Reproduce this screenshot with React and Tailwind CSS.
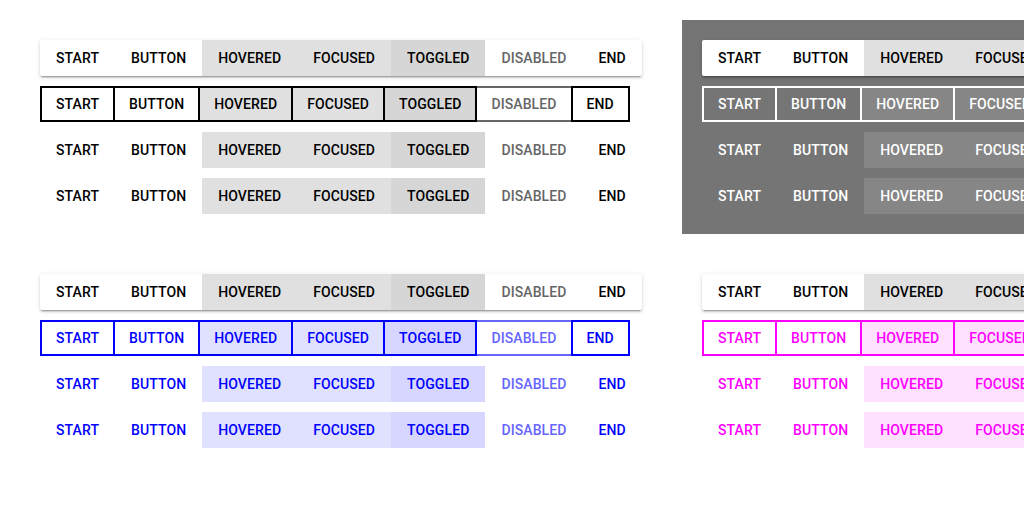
import React from 'react'

const LABELS = ['Start', 'Button', 'Hovered', 'Focused', 'Toggled', 'Disabled', 'End']

const THEMES = {
  plain: {
    text: 'text-black',
    border: 'border-black',
    hover: 'bg-[#e0e0e0]',
    toggle: 'bg-[#d6d6d6]',
    disText: 'text-[#666666]',
    disBorder: 'border-[#666666]',
  },
  dark: {
    text: 'text-white',
    border: 'border-white',
    hover: 'bg-[#868686]',
    toggle: 'bg-[#8e8e8e]',
    disText: 'text-[#c8c8c8]',
    disBorder: 'border-[#c8c8c8]',
  },
  blue: {
    text: 'text-[#0000ff]',
    border: 'border-[#0000ff]',
    hover: 'bg-[#e0e0ff]',
    toggle: 'bg-[#d6d6ff]',
    disText: 'text-[#6666ff]',
    disBorder: 'border-[#6666ff]',
  },
  magenta: {
    text: 'text-[#ff00ff]',
    border: 'border-[#ff00ff]',
    hover: 'bg-[#ffe0ff]',
    toggle: 'bg-[#ffd6ff]',
    disText: 'text-[#ff66ff]',
    disBorder: 'border-[#ff66ff]',
  },
}

function bgFor(label, theme) {
  if (label === 'Hovered' || label === 'Focused') return theme.hover
  if (label === 'Toggled') return theme.toggle
  return ''
}

function ButtonRow({ theme, variant }) {
  const t = variant === 'elevated' ? THEMES.plain : theme
  const outlined = variant === 'outlined'

  return (
    <div
      className={`flex h-9 rounded-[2px] ${
        variant === 'elevated'
          ? 'bg-white shadow-[0_3px_1px_-2px_rgba(0,0,0,0.2),0_2px_2px_0_rgba(0,0,0,0.14),0_1px_5px_0_rgba(0,0,0,0.12)]'
          : ''
      }`}
    >
      {LABELS.map((label, i) => {
        const disabled = label === 'Disabled'
        const color = disabled ? t.disText : t.text
        const border = outlined
          ? `border-2 px-[14px] ${disabled ? t.disBorder : `${t.border} relative`} ${i > 0 ? '-ml-[2px]' : ''}`
          : 'px-4'
        return (
          <button
            key={label}
            type="button"
            className={`flex h-9 items-center uppercase text-[14px] font-medium tracking-[0.1px] ${color} ${bgFor(label, t)} ${border}`}
          >
            {label}
          </button>
        )
      })}
    </div>
  )
}

function Panel({ theme, dark }) {
  return (
    <div className={`flex w-[642px] flex-col items-start gap-[10px] p-5 ${dark ? 'bg-[#757575]' : 'bg-white'}`}>
      <ButtonRow theme={theme} variant="elevated" />
      <ButtonRow theme={theme} variant="outlined" />
      <ButtonRow theme={theme} variant="text" />
      <ButtonRow theme={theme} variant="flat" />
    </div>
  )
}

export default function App() {
  return (
    <div
      className="h-[508px] w-[1024px] overflow-hidden bg-white"
      style={{ fontFamily: 'Roboto, "Noto Sans", sans-serif' }}
    >
      <div className="grid w-max grid-cols-[642px_642px] gap-5 p-5">
        <Panel theme={THEMES.plain} />
        <Panel theme={THEMES.dark} dark />
        <Panel theme={THEMES.blue} />
        <Panel theme={THEMES.magenta} />
      </div>
    </div>
  )
}
